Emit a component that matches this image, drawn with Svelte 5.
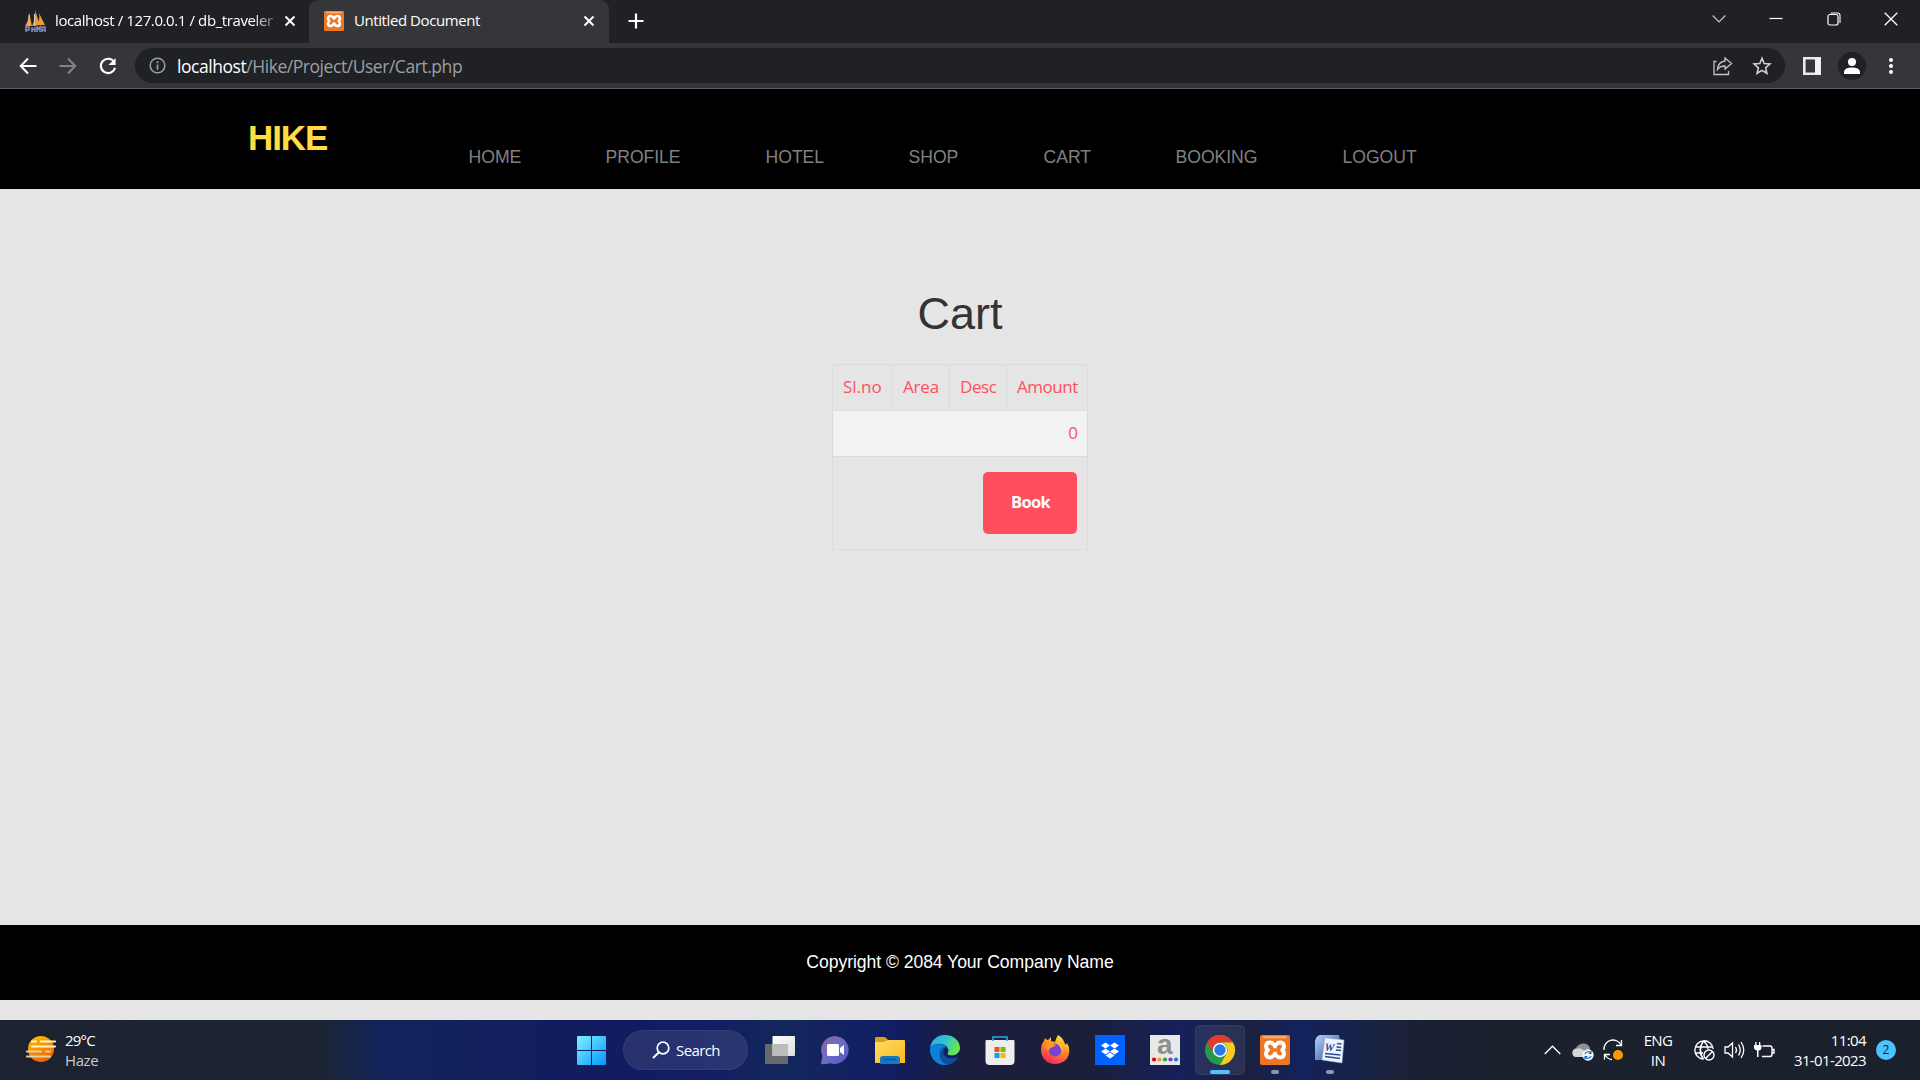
<script>
  const nav = [
    { label: 'HOME', w: 137 },
    { label: 'PROFILE', w: 160 },
    { label: 'HOTEL', w: 143 },
    { label: 'SHOP', w: 135 },
    { label: 'CART', w: 132 },
    { label: 'BOOKING', w: 167 },
    { label: 'LOGOUT', w: 80 }
  ];
  const headers = ['Sl.no', 'Area', 'Desc', 'Amount'];
  const dots = ['#e0001b', '#f79a1d', '#2f9e4b', '#8637c9', '#0a84e0'];
</script>

{#snippet xampp(size)}
  <svg width={size} height={size} viewBox="0 0 30 30">
    <rect width="30" height="30" rx="2" fill="#ee7726" />
    <rect x="3" y="1.2" width="24" height="2" rx="1" fill="#f9b27c" />
    <path d="M10 7.500C5.500 7.500 5 12.500 7.800 15C5 17.500 5.500 22.500 10 22.500C13.500 22.500 13 19.800 15 19.800C17 19.800 16.500 22.500 20 22.500C24.500 22.500 25 17.500 22.200 15C25 12.500 24.500 7.500 20 7.500C16.500 7.500 17 10.200 15 10.200C13 10.200 13.500 7.500 10 7.500Z" fill="none" stroke="#fff" stroke-width="4" stroke-linejoin="round" />
    <path d="M13.300 12.200H16.700M13.300 17.800H16.700" stroke="#fff" stroke-width="2.200" />
  </svg>
{/snippet}

<div class="screen">
  <header class="tabs">
    <div class="tab first">
      <svg width="22" height="28" viewBox="0 0 22 28">
        <path d="M1 19Q5 13 5 5L8 19ZM8 19Q12 11 11 3L16 18ZM14 18Q16 11 15 6L21 18Z" fill="#f09a2c" />
        <path d="M5 8V19M10.500 7V19" stroke="#d9ccb8" stroke-width="1" />
        <path d="M2 25V20H5V23H2M8 25V20M11 25V20M8 22.500H11M13 25V20L14.500 22L16 20V25M18 25V20H21V25M18 23H21" fill="none" stroke="#8b8fc0" stroke-width="1.500" />
      </svg>
      <span class="title">localhost / 127.0.0.1 / db_traveler</span>
      <svg class="x" width="12" height="12" viewBox="0 0 12 12"><path d="M1.500 1.500L10.500 10.500M10.500 1.500L1.500 10.500" stroke="#fff" stroke-width="2" /></svg>
    </div>
    <div class="tab active">
      {@render xampp(20)}
      <span class="title two">Untitled Document</span>
      <svg class="x" width="12" height="12" viewBox="0 0 12 12"><path d="M1.500 1.500L10.500 10.500M10.500 1.500L1.500 10.500" stroke="#fff" stroke-width="2" /></svg>
    </div>
    <svg class="plus" width="16" height="16" viewBox="0 0 16 16"><path d="M8 0.500V15.500M0.500 8H15.500" stroke="#fff" stroke-width="2.200" /></svg>
    <div class="controls">
      <svg width="14" height="14" viewBox="0 0 14 14"><path d="M.7 3.500L7 10L13.300 3.500" fill="none" stroke="#ccc" stroke-width="1.100" /></svg>
      <svg width="14" height="14" viewBox="0 0 14 14"><path d="M.5 6.500H13.500" stroke="#fff" stroke-width="1.200" /></svg>
      <svg width="14" height="14" viewBox="0 0 14 14"><rect x="1" y="2.500" width="10" height="10.500" rx="2" fill="none" stroke="#fff" stroke-width="1.200" /><path d="M3.500 1H10.500Q13 1 13 3.500V11" fill="none" stroke="#fff" stroke-width="1.100" /></svg>
      <svg width="14" height="14" viewBox="0 0 14 14"><path d="M.7 .7L13.300 13.300M13.300 .7L.7 13.300" stroke="#fff" stroke-width="1.300" /></svg>
    </div>
  </header>

  <div class="toolbar">
    <svg width="18" height="18" viewBox="0 0 18 18"><path d="M17.500 9H2M9 1.500L1.700 9L9 16.500" fill="none" stroke="#fff" stroke-width="2" /></svg>
    <svg class="fwd" width="18" height="18" viewBox="0 0 18 18"><path d="M.5 9H16M9 1.500L16.300 9L9 16.500" fill="none" stroke="#828386" stroke-width="2" /></svg>
    <svg class="reload" width="18" height="18" viewBox="0 0 20 20"><path d="M16.800 5.500A8 8 0 1 0 17.800 12" fill="none" stroke="#fff" stroke-width="2.300" /><path d="M18.500 1V9H10.500Z" fill="#fff" /></svg>
    <div class="omnibox">
      <svg width="17" height="17" viewBox="0 0 17 17"><circle cx="8.500" cy="8.500" r="7.300" fill="none" stroke="#9aa0a6" stroke-width="1.500" /><path d="M8.500 7.500V12.700M8.500 4.300V6.200" stroke="#9aa0a6" stroke-width="1.700" /></svg>
      <span class="url"><b>localhost</b>/Hike/Project/User/Cart.php</span>
      <svg class="share" width="20" height="20" viewBox="0 0 20 20"><path d="M3.500 5.500H1V18.500H15.500V15M12 2L18.500 7.500L12 13V10Q7 10 4.500 13.500Q5 6 12 5Z" fill="none" stroke="#c2c3c5" stroke-width="1.300" /></svg>
      <svg class="star" width="20" height="20" viewBox="0 0 20 20"><path d="M10 2.300L12.200 7.500L17.900 8L13.600 11.800L14.900 17.300L10 14.400L5.100 17.300L6.400 11.800L2.100 8L7.800 7.500Z" fill="none" stroke="#ced0d2" stroke-width="1.600" /></svg>
    </div>
    <svg class="panel" width="18" height="18" viewBox="0 0 18 18"><path d="M1.300 1.300H16.700V16.700H1.300Z" fill="none" stroke="#e9eaed" stroke-width="2.600" /><path d="M12 1H17V17H12Z" fill="#f1f3f4" /></svg>
    <svg class="avatar" width="28" height="28" viewBox="0 0 28 28"><circle cx="14" cy="14" r="14" fill="#202124" /><circle cx="14" cy="10" r="4" fill="#fff" /><path d="M6 22V19.500Q7 15.500 14 15.500Q21 15.500 22 19.500V22Z" fill="#fff" /></svg>
    <svg class="menu" width="6" height="18" viewBox="0 0 6 18"><g fill="#fff"><circle cx="3" cy="3" r="2" /><circle cx="3" cy="9" r="2" /><circle cx="3" cy="15" r="2" /></g></svg>
  </div>

  <nav>
    <div class="brand">HIKE</div>
    <div class="links">
      {#each nav as item}
        <span style:width="{item.w}px">{item.label}</span>
      {/each}
    </div>
  </nav>

  <main>
    <h1>Cart</h1>
    <div class="table">
      <div class="row head">
        {#each headers as h}<span>{h}</span>{/each}
      </div>
      <div class="row total">0</div>
      <div class="row action"><button>Book</button></div>
    </div>
  </main>

  <footer><span>Copyright © 2084 Your Company Name</span></footer>
  <div class="below"></div>

  <div class="taskbar">
    <div class="weather">
      <svg width="30" height="28" viewBox="0 0 30 28">
        <defs><linearGradient id="sun" x1="0" y1="0" x2=".5" y2="1"><stop offset="0" stop-color="#ffc800" /><stop offset="1" stop-color="#ea6407" /></linearGradient></defs>
        <circle cx="15" cy="14" r="13" fill="url(#sun)" />
        <g stroke-width="2.200" stroke-linecap="round"><path d="M6 6.500H10M15 6.500H29M6 11.500H29" stroke="#fff2cc" /><path d="M1 16.500H15M20 16.500H24M1 21.500H24" stroke="#e6cf9c" /></g>
      </svg>
      <div><span>29°C</span><span class="haze">Haze</span></div>
    </div>

    <div class="apps">
      <svg class="start" width="29" height="29" viewBox="0 0 29 29">
        <defs><linearGradient id="win" x1="0" y1="0" x2="1" y2="1"><stop offset="0" stop-color="#7df3ff" /><stop offset="1" stop-color="#0794ff" /></linearGradient></defs>
        <path d="M0 1Q0 0 1 0H14V14H0ZM15 0H28Q29 0 29 1V14H15ZM0 15H14V29H1Q0 29 0 28ZM15 15H29V28Q29 29 28 29H15Z" fill="url(#win)" />
      </svg>
      <div class="search">
        <svg width="18" height="18" viewBox="0 0 18 18"><circle cx="11" cy="7" r="5.800" fill="none" stroke="#fff" stroke-width="1.700" /><path d="M7 11.200L1 17" stroke="#fff" stroke-width="2" /></svg>
        <span>Search</span>
      </div>
      <div class="app">
        <svg width="30" height="30" viewBox="0 0 30 30">
          <defs><linearGradient id="tv" x1="0" y1="0" x2="1" y2="1"><stop offset="0" stop-color="#fff" /><stop offset="1" stop-color="#ddd" /></linearGradient></defs>
          <rect x="0" y="9" width="23" height="20" rx="1" fill="#68696b" /><rect x="7.500" y="1" width="22.500" height="20" rx="1" fill="url(#tv)" /><rect x="7.500" y="9" width="15.500" height="12" fill="#bcbcbd" />
        </svg>
      </div>
      <div class="app">
        <svg width="30" height="30" viewBox="0 0 30 30">
          <defs><linearGradient id="chat" x1="0" y1="0" x2="1" y2="1"><stop offset="0" stop-color="#94608e" /><stop offset=".45" stop-color="#6e6ec8" /><stop offset="1" stop-color="#5556c5" /></linearGradient></defs>
          <path d="M15 1A14 14 0 1 1 10 28.200Q5 29.500 1 29L2.500 21A14 14 0 0 1 15 1Z" fill="url(#chat)" /><rect x="7" y="9" width="12" height="12" rx="1.500" fill="#fff" /><path d="M20 13L24 10V20L20 17Z" fill="#fff" />
        </svg>
      </div>
      <div class="app">
        <svg width="30" height="30" viewBox="0 0 30 30">
          <defs><linearGradient id="fold" x1="0" y1="0" x2="1" y2="1"><stop offset="0" stop-color="#ffda68" /><stop offset="1" stop-color="#fabb1c" /></linearGradient></defs>
          <path d="M0 3Q0 2 1 2H9Q11 2 13 5H29V12H0Z" fill="#dda00c" /><path d="M0 7H9L13 5H29Q30 5 30 6V28H0Z" fill="url(#fold)" /><path d="M5 29V24Q5 21 8 21H22Q25 21 25 24V29Z" fill="#1678c1" /><path d="M9 24.500H21" stroke="#08528c" stroke-width="1.300" />
        </svg>
      </div>
      <div class="app">
        <svg width="30" height="30" viewBox="0 0 30 30">
          <defs><linearGradient id="edge" x1="0" y1="0" x2="1" y2=".4"><stop offset="0" stop-color="#28a7e8" /><stop offset=".55" stop-color="#35c2d1" /><stop offset="1" stop-color="#66e64d" /></linearGradient></defs>
          <path d="M0 15A15 15 0 0 1 15 0L28 22A15 15 0 0 1 0 15Z" fill="#0c63b5" />
          <path d="M0 14C1 5 7 0 15 0C24 0 30 6 30 13C30 18 26 20.500 22 20.500C19 20.500 17 20 17.500 18.500C20 15 18 10 12 9C6 8 1 10 0 14Z" fill="url(#edge)" />
          <path d="M0 14C2 8 12 8 16 12C12 11 9 15 9.500 20C10 25 13 28 18 29.500C8 32 0 24 0 14Z" fill="#0d80d7" />
          <path d="M16 12C12 14 11 19 16 22C20 25 25 24 28 22C25 28 20 30 17 29.700C9 27 7 15 16 12Z" fill="#124d9c" />
          <path d="M16 12C19 14 18.500 17 17.500 18.500C17 20 19 20.500 22 20.500Q26 20.500 29 17Q29 20 28 22C24 24 20 24 16 22C12 19 12.500 14 16 12Z" fill="#121f60" />
        </svg>
      </div>
      <div class="app">
        <svg width="30" height="30" viewBox="0 0 30 30">
          <path d="M.5 6Q.5 5 1.500 5H28.500Q29.500 5 29.500 6V26Q29.500 30 25.500 30H4.500Q.5 30 .5 26Z" fill="#eee" /><path d="M8 6V2H22V6" fill="none" stroke="#29a9e5" stroke-width="1.600" />
          <path d="M9.500 12H14.500V17H9.500Z" fill="#f25022" /><path d="M15.500 12H20.500V17H15.500Z" fill="#7fba00" /><path d="M9.500 18H14.500V23H9.500Z" fill="#00a4ef" /><path d="M15.500 18H20.500V23H15.500Z" fill="#ffb900" />
        </svg>
      </div>
      <div class="app">
        <svg width="30" height="30" viewBox="0 0 30 30">
          <defs><linearGradient id="ff" x1=".8" y1="0" x2=".3" y2="1"><stop offset="0" stop-color="#fff044" /><stop offset=".4" stop-color="#ff9824" /><stop offset="1" stop-color="#f5265c" /></linearGradient></defs>
          <path d="M18 0Q23 3 24 7L26 10L27 8Q30 13 29 18C28 25 22 29 15 29C7 29 1 23 1 15Q1 9 4 6L5 3Q6 5 8 5L11 2V6L15 7Q16 3 18 0Z" fill="url(#ff)" />
          <circle cx="15" cy="15" r="6.500" fill="#7a42d4" /><path d="M5 10Q10 6 16 10L13 12Q9 13 9 16Q5 14 5 10Z" fill="#ff9726" /><path d="M19 8Q24 11 22 17Q20 9 15 8Z" fill="#ffbd37" />
        </svg>
      </div>
      <div class="app">
        <svg width="30" height="30" viewBox="0 0 30 30">
          <rect width="30" height="30" fill="#0061fe" /><path d="M10.500 7.500L15 10.500L10.500 13.500L6 10.500ZM19.500 7.500L24 10.500L19.500 13.500L15 10.500ZM10.500 13.500L15 16.500L10.500 19.500L6 16.500ZM19.500 13.500L24 16.500L19.500 19.500L15 16.500ZM15 17.500L19.500 20.500L15 23.500L10.500 20.500Z" fill="#fff" />
        </svg>
      </div>
      <div class="app">
        <svg width="30" height="30" viewBox="0 0 30 30">
          <rect width="30" height="30" fill="#e9e9e9" /><text class="amz" x="14.700" y="19" text-anchor="middle">a</text>
          {#each dots as c, i}<circle cx={4 + i * 5.500} cy="24.500" r="2.100" fill={c} />{/each}
        </svg>
      </div>
      <div class="app current">
        <svg width="30" height="30" viewBox="0 0 30 30">
          <circle cx="15" cy="15" r="15" fill="#27994a" /><path d="M2 7.500A15 15 0 0 1 28 7.500H15A7.500 7.500 0 0 0 8.500 18.750Z" fill="#e33b2e" /><path d="M28 7.500A15 15 0 0 1 15 30L21.500 18.750A7.500 7.500 0 0 0 15 7.500Z" fill="#fcc822" /><circle cx="15" cy="15" r="7.200" fill="#fff" /><circle cx="15" cy="15" r="5.700" fill="#2b78e9" />
        </svg>
        <i class="long"></i>
      </div>
      <div class="app">{@render xampp(30)}<i></i></div>
      <div class="app">
        <svg width="30" height="30" viewBox="0 0 30 30">
          <defs><linearGradient id="word" x1="0" y1="0" x2="1" y2="1"><stop offset="0" stop-color="#b7d4f5" /><stop offset="1" stop-color="#244b9b" /></linearGradient></defs>
          <path d="M5 0H24L25 5L12 25H0V6Q1 1 5 0Z" fill="url(#word)" /><path d="M10 3L29 5L27 28L7 25Z" fill="#edf2fb" stroke="#a7bbdc" stroke-width=".5" />
          <text class="wordmark" x="9.500" y="15.500" transform="rotate(5 10 14)">W</text><path d="M22 8.500L26.500 9M21.500 12L26.200 12.500M21 15L26 15.500M10 18.500L25.500 20M10 21.500L25 23.500" stroke="#284c9c" stroke-width="1.600" />
        </svg>
        <i></i>
      </div>
    </div>

    <div class="tray">
      <svg class="up" width="17" height="10" viewBox="0 0 17 10"><path d="M.7 9L8.500 1.200L16.300 9" fill="none" stroke="#fff" stroke-width="1.300" /></svg>
      <svg class="cloud" width="21" height="18" viewBox="0 0 21 18"><path d="M5 14A4.500 4.500 0 0 1 3 5Q5 1 10 .500Q15 0 17 5V14Z" fill="#8f9298" /><path d="M4 14A4 4 0 0 1 3 6Q9 3 14 12V14Z" fill="#d5d7da" /><circle cx="15" cy="12" r="5.700" fill="#f4f7fb" /><path d="M12 11A3.500 3.500 0 0 1 18 10M18 13A3.500 3.500 0 0 1 12 14M18 8V10.500H15.500M12 16V13.500H14.500" fill="none" stroke="#1672c4" stroke-width="1.200" /></svg>
      <svg class="update" width="21" height="22" viewBox="0 0 21 22"><path d="M1 11A9 9 0 0 1 18 6M18.500 1V6.500H13M1.500 20.500V15.500H7M2 16Q5 20.500 9 20.500" fill="none" stroke="#fff" stroke-width="1.300" /><circle cx="15" cy="16" r="5" fill="#ff9800" /></svg>
      <div class="lang"><span>ENG</span><span>IN</span></div>
      <svg class="globe" width="21" height="21" viewBox="0 0 21 21"><g fill="none" stroke="#fff" stroke-width="1.400"><path d="M9.500 19.200A9.200 9.200 0 1 1 19.200 9M1.500 7H18.500M1.500 13H9M9 19Q3 10 9.500 1Q14 5 14 9M9.500 1Q7 4 6.500 10Q7 16 9.500 19.200" /><circle cx="15" cy="15" r="5" /><path d="M11.500 18.500L18.500 11.500" /></g></svg>
      <svg class="sound" width="21" height="20" viewBox="0 0 21 20"><path d="M1 7H4L8.500 3V17L4 13H1ZM11.500 7Q13.500 10 11.500 13M14.500 4.500Q18 10 14.500 15.500M17 2Q22.500 10 17 18" fill="none" stroke="#fff" stroke-width="1.300" /></svg>
      <svg class="battery" width="21" height="18" viewBox="0 0 21 18"><path d="M8.500 5H16Q18 5 18 7V13Q18 15.500 16 15.500H8M18.500 8.500H20V12H18.500" fill="none" stroke="#fff" stroke-width="1.400" /><path d="M0 4H7.500V7Q7 9.500 5 9.500H4.500V16H3V9.500Q.5 9 0 7ZM1.200 1H2.500V4H1.200ZM5 1H6.300V4H5Z" fill="#fff" /></svg>
      <div class="clock"><span>11:04</span><span class="date">31-01-2023</span></div>
      <div class="badge">2</div>
    </div>
  </div>
</div>

<style>
  :global(body) { margin: 0; overflow: hidden; }
  .screen { width: 1920px; height: 1080px; display: flex; flex-direction: column; background: #e5e5e5; font-family: "Open Sans", "Noto Sans", sans-serif; overflow: hidden; }
  svg { display: block; flex: none; overflow: visible; }
  .screen, .screen * { box-sizing: border-box; }
  span { white-space: nowrap; }

  .tabs { height: 43px; flex: none; display: flex; align-items: center; background: #202124; color: #fff; font-size: 15px; }
  .tab { height: 43px; display: flex; align-items: center; flex: none; padding-bottom: 1px; }
  .first { width: 309px; padding-left: 24px; }
  .title { padding-bottom: 2px; }
  .first .title { margin-left: 9px; width: 220px; overflow: hidden; letter-spacing: -.4px; -webkit-mask-image: linear-gradient(90deg, #000 90%, #0004); mask-image: linear-gradient(90deg, #000 90%, #0004); }
  .first .x { margin-left: 9px; }
  .active { width: 300px; padding: 0 14px 1px 15px; background: #35363a; border-radius: 9px 9px 0 0; }
  .active .title { margin-left: 10px; flex: 1; letter-spacing: -.42px; }
  .plus { margin-left: 19px; margin-top: -1px; }
  .controls { margin-left: auto; padding-right: 22px; display: flex; gap: 43.500px; margin-top: -5px; }

  .toolbar { height: 46px; flex: none; background: #35363a; border-bottom: 1px solid #5f6063; display: flex; align-items: center; padding-left: 19px; }
  .fwd { margin-left: 22px; }
  .reload { margin-left: 22px; }
  .omnibox { margin-left: 18px; width: 1650px; height: 35px; border-radius: 18px; background: #202124; display: flex; align-items: center; padding-left: 14px; }
  .url { margin-left: 11px; font-size: 17.500px; color: #9aa0a6; flex: 1; letter-spacing: -.45px; }
  .url b { font-weight: 400; color: #fff; }
  .star { margin-left: 19px; margin-right: 13px; }
  .panel { margin-left: 18px; }
  .avatar { margin-left: 17px; }
  .menu { margin-left: 22px; }

  nav { height: 100px; flex: none; background: #000; display: flex; font-family: "Liberation Sans", Arial, sans-serif; }
  .brand { width: 221px; margin-left: 248px; padding-top: 29px; color: #ffdd40; font-size: 35px; font-weight: 700; line-height: 40px; letter-spacing: -1.1px; }
  .links { display: flex; padding-top: 57px; color: #808080; font-size: 17.600px; line-height: 22px; letter-spacing: -.05px; }
  .links span { margin-left: -1px; margin-right: 1px; position: relative; left: .6px; }

  main { height: 736px; flex: none; display: flex; flex-direction: column; align-items: center; }
  h1 { margin: 98px 0 0; height: 77px; font: 400 45px/54px "Liberation Sans", Arial, sans-serif; color: #333; }
  .table { width: 256px; height: 186px; border: 1px solid #dbdbdb; color: #ff4f5e; font-size: 17px; }
  .head { height: 46px; display: grid; grid-template-columns: 60px 57px 57px 80px; border-bottom: 1px solid #dbdbdb; line-height: 43px; letter-spacing: -.45px; }
  .head span { padding-left: 10px; border-right: 1px solid #dbdbdb; }
  .head span:first-child { letter-spacing: 0; }
  .head span:nth-child(2) { letter-spacing: -.2px; }
  .head span:last-child { border: 0; }
  .total { height: 46px; background: #f2f2f2; border-bottom: 1px solid #dbdbdb; text-align: right; padding-right: 9px; line-height: 43px; }
  .action { display: flex; justify-content: flex-end; padding: 15px 10px 0 0; }
  button { width: 94px; height: 62px; border: 0; border-radius: 5px; padding: 0 0 2px 1px; background: #ff4f5e; color: #fff; font: 700 16.500px/60px "Open Sans", sans-serif; letter-spacing: -.7px; }

  footer { height: 75px; flex: none; background: #000; color: #fff; text-align: center; font: 17.600px/75px "Liberation Sans", Arial, sans-serif; letter-spacing: -.06px; }
  .below { height: 20px; flex: none; background: #e5e5e5; }

  .taskbar { height: 60px; flex: none; display: flex; color: #fff; font-size: 15px; background: linear-gradient(90deg, #1c222f 0, #1c2433 320px, #12235a 380px, #111d5e 590px, #121d64 700px, #13275a 780px, #111d64 890px, #1a1e3d 960px, #1b1f38 1080px, #16205a 1180px, #1a2040 1250px, #12225c 1300px, #1a2138 1400px, #1c212e 1500px, #1b202d 1920px); }
  .weather { width: 577px; padding: 10px 0 0 26px; display: flex; gap: 9px; line-height: 20px; }
  .weather svg { margin-top: 5px; }
  .weather div, .lang, .clock { display: flex; flex-direction: column; }
  .weather span { letter-spacing: -.8px; }
  .weather .haze { color: #c8cacd; letter-spacing: -.4px; }
  .apps { display: flex; align-items: center; }
  .search { width: 125px; height: 40px; margin: 0 7px 0 17px; border-radius: 20px; background: #ffffff18; border: 1px solid #ffffff0d; display: flex; align-items: center; padding-left: 28px; gap: 6px; letter-spacing: -.6px; }
  .app { position: relative; width: 50px; height: 50px; margin-right: 5px; border-radius: 5px; display: flex; align-items: center; justify-content: center; }
  .current { background: #ffffff14; border: 1px solid #ffffff10; }
  .app i { position: absolute; bottom: 1px; width: 8px; height: 4px; border-radius: 2px; background: #9096aa; }
  .app .long { width: 20px; bottom: 0; background: #4cc2ff; }
  .amz { font: 700 28px "Liberation Sans", sans-serif; fill: #8e8e8e; }
  .wordmark { font: italic 700 11px "Liberation Serif", serif; fill: #284c9c; }
  .tray { margin-left: auto; display: flex; align-items: center; padding-right: 24px; }
  .cloud { margin-left: 12px; margin-top: 3px; }
  .update { margin-left: 9px; }
  .lang { width: 34px; margin-left: 17px; margin-right: -1px; align-items: center; line-height: 20px; letter-spacing: -.6px; }
  .globe { margin-left: 20px; }
  .sound { margin-left: 9px; }
  .battery { margin-left: 9px; }
  .clock { width: 84px; margin-left: 7px; align-items: flex-end; line-height: 20px; letter-spacing: -.62px; margin-top: -1px; }
  .badge { width: 20px; height: 20px; margin-left: 10px; border-radius: 50%; background: #4cc2ff; color: #10202c; text-align: center; font-size: 12px; line-height: 20px; }
</style>
